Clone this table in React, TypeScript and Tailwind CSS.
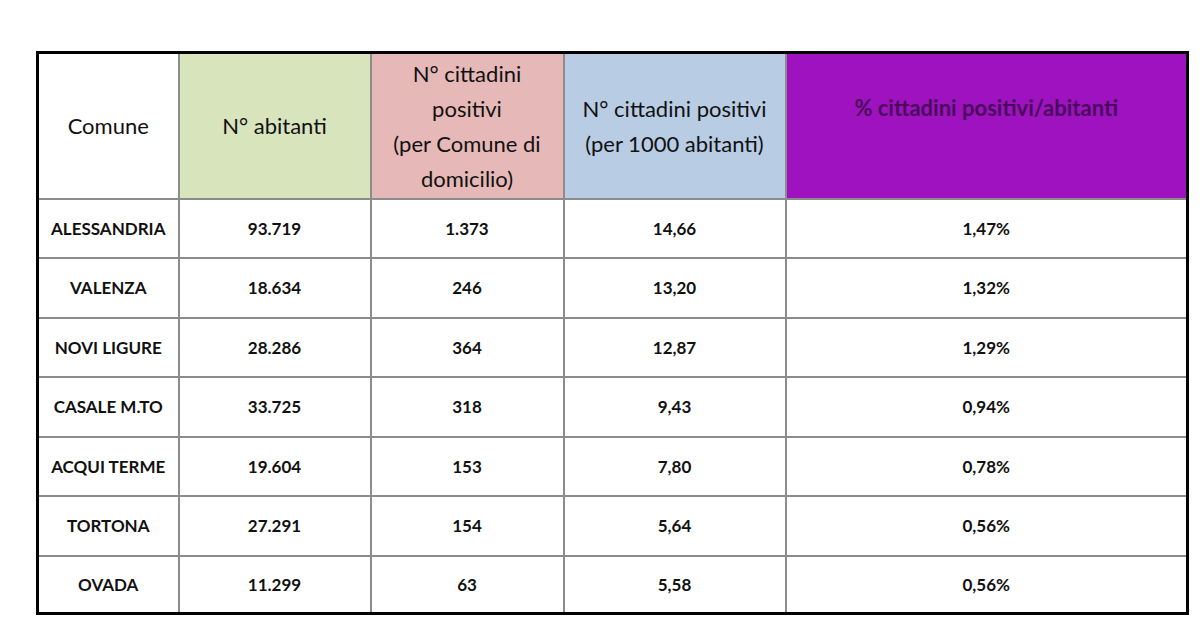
import React from 'react';

type Row = { comune: string; abitanti: string; positivi: string; per1000: string; perc: string };

const rows: Row[] = [
  { comune: 'ALESSANDRIA', abitanti: '93.719', positivi: '1.373', per1000: '14,66', perc: '1,47%' },
  { comune: 'VALENZA', abitanti: '18.634', positivi: '246', per1000: '13,20', perc: '1,32%' },
  { comune: 'NOVI LIGURE', abitanti: '28.286', positivi: '364', per1000: '12,87', perc: '1,29%' },
  { comune: 'CASALE M.TO', abitanti: '33.725', positivi: '318', per1000: '9,43', perc: '0,94%' },
  { comune: 'ACQUI TERME', abitanti: '19.604', positivi: '153', per1000: '7,80', perc: '0,78%' },
  { comune: 'TORTONA', abitanti: '27.291', positivi: '154', per1000: '5,64', perc: '0,56%' },
  { comune: 'OVADA', abitanti: '11.299', positivi: '63', per1000: '5,58', perc: '0,56%' },
];

const App: React.FC = () => {
  return (
    <div className="w-[1200px] h-[640px] bg-white pt-[51px] pl-[36px] font-['Lato','Liberation_Sans',sans-serif] text-[#111]">
      <table className="table-fixed border-collapse border-[3px] border-black w-[1150px]">
        <colgroup>
          <col className="w-[141px]" />
          <col className="w-[192px]" />
          <col className="w-[193px]" />
          <col className="w-[222px]" />
          <col className="w-[402px]" />
        </colgroup>
        <thead>
          <tr className="h-[146px] text-[22px] leading-[35px] text-center">
            <th className="font-normal border-2 border-[#8c8c8c] bg-white">Comune</th>
            <th className="font-normal border-2 border-[#8c8c8c] bg-[#d8e4bc]">N° abitanti</th>
            <th className="font-normal border-2 border-[#8c8c8c] bg-[#e6b8b7] px-1">
              N° cittadini
              <br />
              positivi
              <br />
              (per Comune di
              <br />
              domicilio)
            </th>
            <th className="font-normal border-2 border-[#8c8c8c] bg-[#b8cce4] px-1">
              N° cittadini positivi
              <br />
              (per 1000 abitanti)
            </th>
            <th className="font-bold border-2 border-[#8c8c8c] bg-[#9e12c0] text-[#4a0a5c] pb-[36px]">
              % cittadini positivi/abitanti
            </th>
          </tr>
        </thead>
        <tbody>
          {rows.map((r, i) => (
            <tr key={r.comune} className={i === rows.length - 1 ? 'h-[58px]' : 'h-[59.5px]'}>
              <td className="border-2 border-[#8c8c8c] text-center font-bold text-[17px]">{r.comune}</td>
              <td className="border-2 border-[#8c8c8c] text-center font-bold text-[17px]">{r.abitanti}</td>
              <td className="border-2 border-[#8c8c8c] text-center font-bold text-[17px]">{r.positivi}</td>
              <td className="border-2 border-[#8c8c8c] text-center font-bold text-[17px]">{r.per1000}</td>
              <td className="border-2 border-[#8c8c8c] text-center font-bold text-[17px]">{r.perc}</td>
            </tr>
          ))}
        </tbody>
      </table>
    </div>
  );
};

export default App;
